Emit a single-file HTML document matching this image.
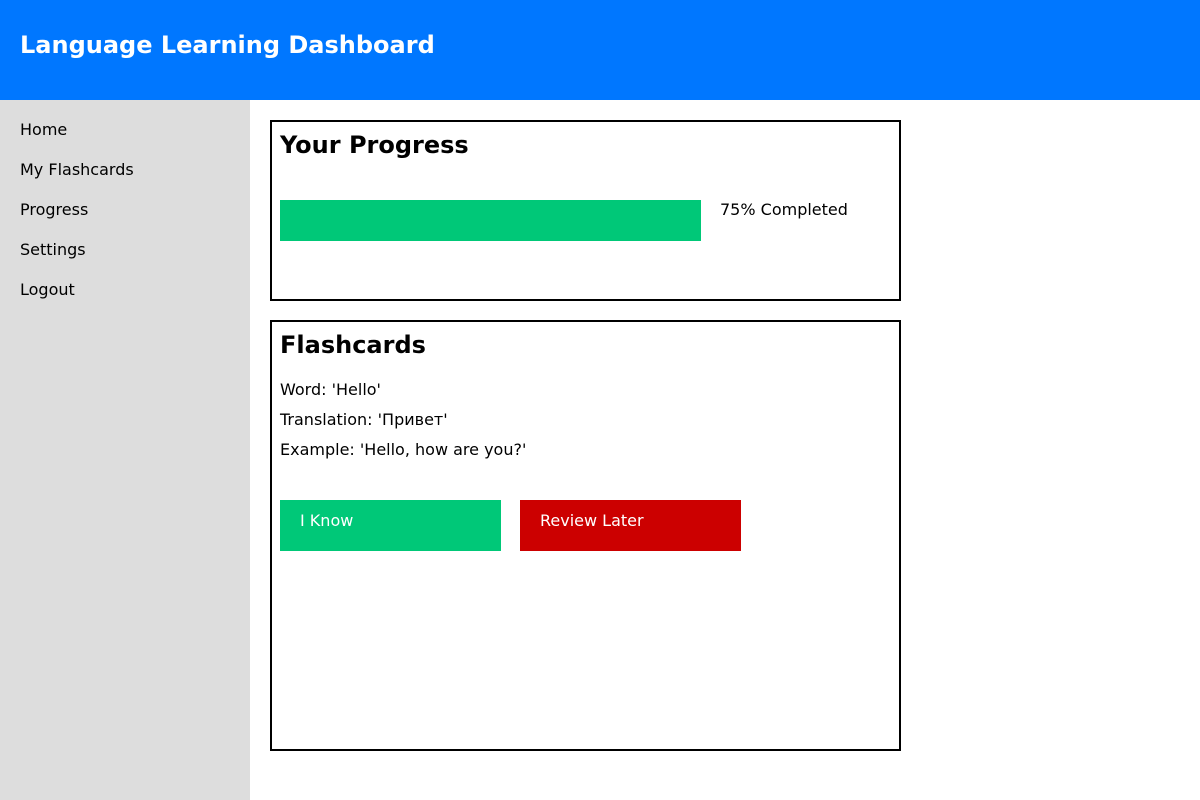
<!DOCTYPE html>
<html><head><style>
*{margin:0;padding:0;box-sizing:border-box}
body{width:1200px;height:800px;font-family:"DejaVu Sans","Liberation Sans",sans-serif;background:#fff;position:relative;overflow:hidden;color:#000}
.hd{position:absolute;left:0;top:0;width:1200px;height:100px;background:#0077ff;color:#fff;font-weight:bold;font-size:24px;padding-left:20px;line-height:91px}
.sb{position:absolute;left:0;top:100px;width:250px;height:700px;background:#dddddd}
.sb div{position:absolute;left:20px;font-size:16px;line-height:22px}
.box{position:absolute;left:270px;width:631px;border:2px solid #000}
.box h2{position:absolute;left:8px;font-size:24px;font-weight:bold;line-height:28px}
.t{position:absolute;font-size:16px;line-height:22px}
.btn{position:absolute;top:178px;width:221px;height:51px;color:#fff;font-size:16px;padding:10px 0 0 20px;line-height:22px}
</style></head><body>
<div class="hd">Language Learning Dashboard</div>
<div class="sb">
<div style="top:19px">Home</div>
<div style="top:59px">My Flashcards</div>
<div style="top:99px">Progress</div>
<div style="top:139px">Settings</div>
<div style="top:179px">Logout</div>
</div>
<div class="box" style="top:120px;height:181px">
<h2 style="top:9px">Your Progress</h2>
<div style="position:absolute;left:8px;top:78px;width:421px;height:41px;background:#00c878"></div>
<div class="t" style="left:448px;top:77px">75% Completed</div>
</div>
<div class="box" style="top:320px;height:431px">
<h2 style="top:9px">Flashcards</h2>
<div class="t" style="left:8px;top:57px">Word: 'Hello'</div>
<div class="t" style="left:8px;top:87px">Translation: 'Привет'</div>
<div class="t" style="left:8px;top:117px">Example: 'Hello, how are you?'</div>
<div class="btn" style="left:8px;background:#00c878">I Know</div>
<div class="btn" style="left:248px;background:#cc0000">Review Later</div>
</div>
</body></html>
